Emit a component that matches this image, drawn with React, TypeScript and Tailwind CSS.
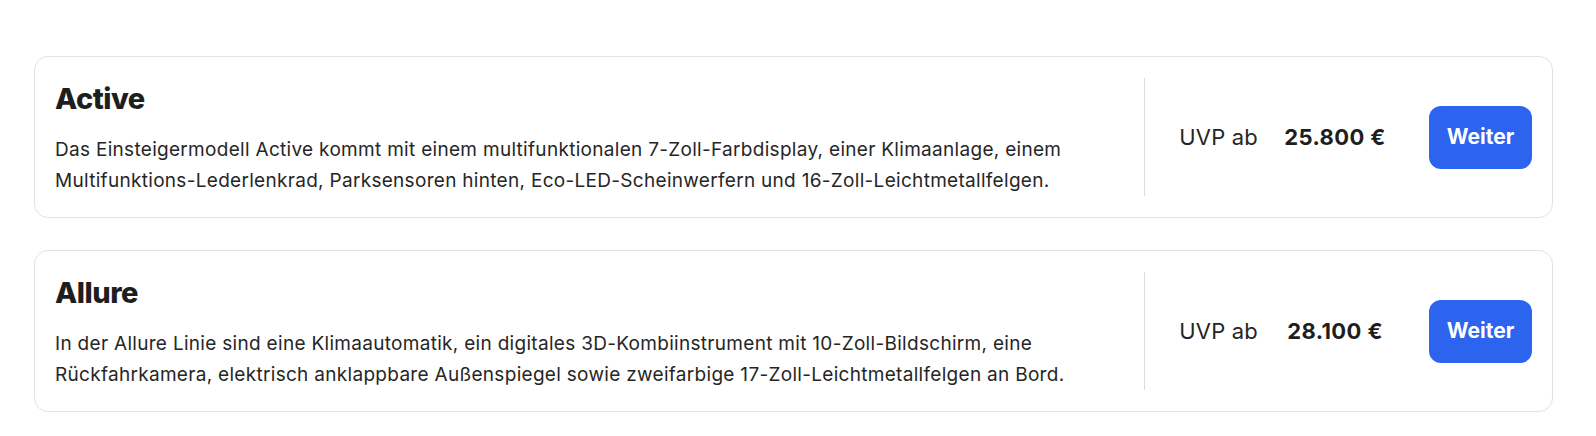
const trims = [
  {
    name: "Active",
    text: "Das Einsteigermodell Active kommt mit einem multifunktionalen 7-Zoll-Farbdisplay, einer Klimaanlage, einem Multifunktions-Lederlenkrad, Parksensoren hinten, Eco-LED-Scheinwerfern und 16-Zoll-Leichtmetallfelgen.",
    price: "25.800 €",
  },
  {
    name: "Allure",
    text: "In der Allure Linie sind eine Klimaautomatik, ein digitales 3D-Kombiinstrument mit 10-Zoll-Bildschirm, eine Rückfahrkamera, elektrisch anklappbare Außenspiegel sowie zweifarbige 17-Zoll-Leichtmetallfelgen an Bord.",
    price: "28.100 €",
  },
];

const TrimCard = ({ name, text, price }: { name: string; text: string; price: string }) => {
  return (
    <div className="flex rounded-[14px] border border-[#e2e2e2] bg-white px-[20px] py-[21px]">
      {/* Beschreibung */}
      <div className="flex-1 pr-[40px]">
        <h2 className="mt-[3px] text-[29px] font-extrabold leading-[36px] tracking-[-0.5px] text-[#1e1e1e]">{name}</h2>
        <p className="mt-[17px] text-[19px] leading-[31px] tracking-[0.3px] text-[#262626]">{text}</p>
      </div>
      {/* Preis + Button */}
      <div className="flex items-center border-l border-[#dcdcdc] pl-[34px]">
        <span className="text-[22px] tracking-[0.2px] text-[#262626]">UVP ab</span>
        <span className="ml-[9px] w-[136px] text-center text-[22px] font-bold tracking-[0.4px] text-[#1e1e1e]">{price}</span>
        <button className="ml-[26px] h-[63px] w-[103px] rounded-[12px] bg-[#2d64ef] text-[21px] font-bold text-white">
          Weiter
        </button>
      </div>
    </div>
  );
};

export default function App() {
  return (
    <div className="min-h-screen bg-white pt-[56px] pl-[34px] pr-[43px] font-['Inter',sans-serif]">
      <div className="flex flex-col gap-[32px]">
        {trims.map((t) => (
          <TrimCard key={t.name} name={t.name} text={t.text} price={t.price} />
        ))}
      </div>
    </div>
  );
}
